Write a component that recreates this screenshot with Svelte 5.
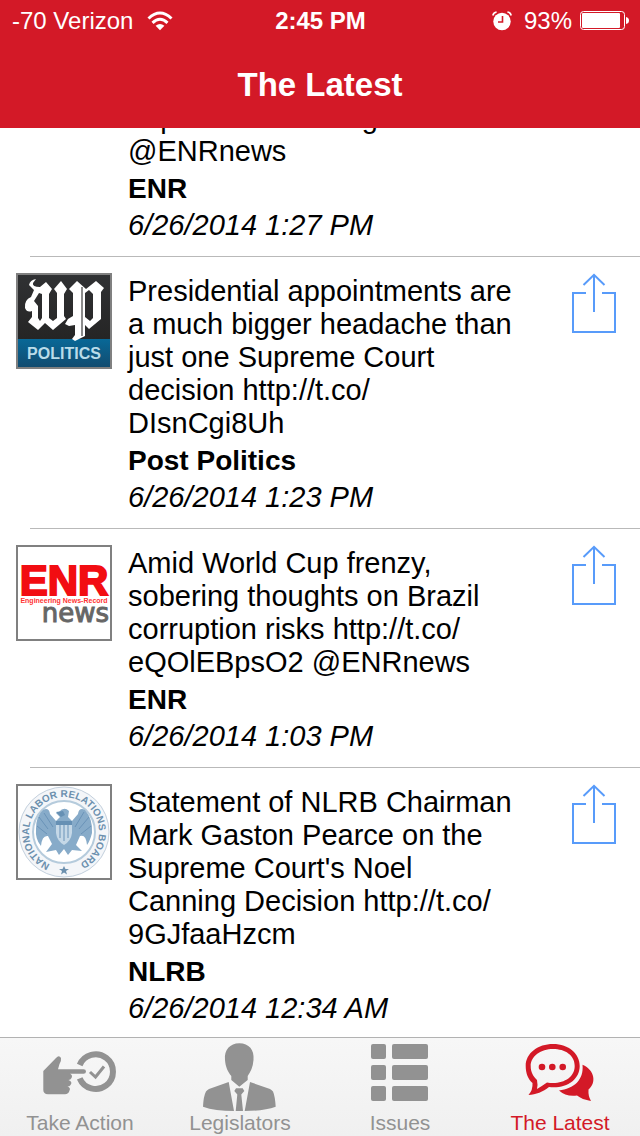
<script lang="ts">
  type Post = { id: number; logo: string; text: string; source: string; date: string };

  const posts: Post[] = [
    {
      id: 1,
      logo: 'enr',
      text: 'Contractors weigh new rules for road and bridge safety work this summer http://t.co/vcirsfleag @ENRnews',
      source: 'ENR',
      date: '6/26/2014 1:27 PM'
    },
    {
      id: 2,
      logo: 'post',
      text: 'Presidential appointments are a much bigger headache than just one Supreme Court decision http://t.co/\u200bDIsnCgi8Uh',
      source: 'Post Politics',
      date: '6/26/2014 1:23 PM'
    },
    {
      id: 3,
      logo: 'enr',
      text: 'Amid World Cup frenzy, sobering thoughts on Brazil corruption risks http://t.co/\u200beQOlEBpsO2 @ENRnews',
      source: 'ENR',
      date: '6/26/2014 1:03 PM'
    },
    {
      id: 4,
      logo: 'nlrb',
      text: "Statement of NLRB Chairman Mark Gaston Pearce on the Supreme Court's Noel Canning Decision http://t.co/\u200b9GJfaaHzcm",
      source: 'NLRB',
      date: '6/26/2014 12:34 AM'
    }
  ];

  const tabs = ['Take Action', 'Legislators', 'Issues', 'The Latest'];
  let active = $state('The Latest');
</script>

<div class="app">
  <header>
    <div class="status">
      <div class="carrier">
        <span>-70 Verizon</span>
        <svg width="26" height="20" viewBox="0 0 26 20" aria-hidden="true">
          <g fill="none" stroke="#fff" stroke-width="3">
            <path d="M1.5 7.5Q13-3.5 24.500 7.500" />
            <path d="M5.500 11.800Q13 4.800 20.500 11.800" />
          </g>
          <path d="M8.600 14.800Q13 11 17.400 14.800L13 19.200Z" fill="#fff" />
        </svg>
      </div>
      <strong>2:45 PM</strong>
      <div class="power">
        <svg class="alarm" width="20" height="20" viewBox="0 0 20 20" aria-hidden="true">
          <circle cx="10" cy="10.5" r="8.7" fill="#fff" />
          <path d="M.8 4.500Q1.500 1.500 4.600 1M15.400 1Q18.500 1.500 19.200 4.500" fill="none" stroke="#fff" stroke-width="1.6" />
          <path d="M10.500 5V11H6" fill="none" stroke="#d31927" stroke-width="1.6" />
        </svg>
        <span>93%</span>
        <svg width="49" height="20" viewBox="0 0 49 20" aria-hidden="true">
          <rect x=".5" y=".5" width="44" height="18" rx="3" fill="none" stroke="#fff" />
          <rect x="2" y="2" width="38" height="15" rx="1" fill="#fff" />
          <path d="M46 6Q49 6.500 49 9.500T46 13Z" fill="#fff" />
        </svg>
      </div>
    </div>
    <h1>The Latest</h1>
  </header>

  <main>
    {#each posts as post (post.id)}
      <article>
        <div class="logo">
          {#if post.logo === 'post'}
            <svg viewBox="0 0 92 92" role="img" aria-label="Post Politics">
              <defs>
                <linearGradient id="dark" x2="0" y2="1"><stop stop-color="#303133" /><stop offset="1" stop-color="#252525" /></linearGradient>
                <linearGradient id="blue" x2="0" y2="1"><stop stop-color="#086897" /><stop offset="1" stop-color="#124c70" /></linearGradient>
              </defs>
              <rect width="92" height="64" fill="url(#dark)" />
              <rect y="64" width="92" height="28" fill="url(#blue)" />
              <g fill="#fff">
                <path d="M18 4Q12 5 11 10L16 15L13 22Q6 25 7 33Q9 38 14 36V42L10 47L20 55L27 48L35 55L48 44L46 41V19L49 14L43 6L36 14L39 18V43L35 46L31 43V19L34 14L28 7L22 12Q14 12 15 8ZM21 18L24 19V43L22 46L20 43V31L16 26Z" />
                <path d="M59 6L51 14L55 18V41L50 44L47 49L51 51L57 50V60L54 64L57 66L67 61V50L71 54L83 44V17L86 13L78 6L68 14ZM67 18L71 15L75 19V43L72 46L67 42Z" />
              </g>
              <path d="M64 12V61" stroke="#8b8b8b" stroke-width="2" />
              <text x="46" y="84" text-anchor="middle" font-size="16" font-weight="700" fill="#b9dcea">POLITICS</text>
            </svg>
          {:else if post.logo === 'enr'}
            <svg viewBox="0 0 92 92" role="img" aria-label="ENR news">
              <text x="46" y="48" text-anchor="middle" font-size="42" font-weight="700" fill="#f20d12" stroke="#f20d12" stroke-width="2">ENR</text>
              <text x="46" y="56" text-anchor="middle" font-size="7" font-weight="700" fill="#f33">Engineering News-Record</text>
              <text class="news" x="91" y="75" text-anchor="end" font-size="26" fill="#666" stroke="#666">news</text>
            </svg>
          {:else}
            <svg viewBox="0 0 92 92" role="img" aria-label="National Labor Relations Board">
              <circle cx="46" cy="46" r="45" fill="#f4f6f9" stroke="#c3d0dd" />
              <circle cx="46" cy="46" r="31" fill="#fff" stroke="#b5cbdc" stroke-width="2" />
              <path id="ring" d="M32 78.200A35 35 0 1 1 60 78.200" fill="none" />
              <text font-size="10" font-weight="700" fill="#6c90ae"><textPath href="#ring">NATIONAL LABOR RELATIONS BOARD</textPath></text>
              <path d="M46 80L47.500 83H51L48 85L49 88.500L46 86.500L43 88.500L44 85L41 83H44.500Z" fill="#6c90ae" />
              <g fill="#87abc9">
                <path d="M41 26Q46 20 51 25L50 31L54 35L60 28Q61 21 67 24Q75 33 74 47Q72 55 69 59Q68 48 62 50L58 59L64 65L54 64L50 69L46 63L41 69L38 64L28 66L34 58L30 50Q24 49 23 60Q17 53 18 43Q18 30 25 24Q31 21 32 28L38 35L42 31L38 27Z" />
                <path d="M38 35H54V47Q53 55 46 59Q39 55 38 47Z" fill="#c5d8e7" />
              </g>
              <path d="M21 31L30 43M19 40L29 48M26 27L35 41M71 31L61 43M73 40L63 48M66 26L57 41M42 39V52M46 39V55M50 39V52" fill="none" stroke="#6a93b8" />
              <path d="M38 35H54V39H38ZM38 26L45 25L47 29L43 31Z" fill="#6690b4" />
            </svg>
          {/if}
        </div>
        <div class="body">
          <p>{post.text}</p>
          <strong>{post.source}</strong>
          <em>{post.date}</em>
        </div>
        <button class="share" aria-label="Share">
          <svg width="44" height="60" viewBox="0 0 44 60" fill="none" stroke="#589bfa" stroke-width="2">
            <path d="M14 20H1V59H43V20H30" />
            <path d="M22 39V2M11.500 12L22 1.800L32.500 12" />
          </svg>
        </button>
      </article>
    {/each}
  </main>

  <nav>
    {#each tabs as tab}
      <button class:active={active === tab} onclick={() => (active = tab)}>
        {#if tab === 'Take Action'}
          <svg width="76" height="70" viewBox="0 0 76 70" fill="currentColor" aria-hidden="true">
            <path d="M1.300 29L14 16Q17 12.500 19 16Q19.500 19 17.500 22L16 27.300H41.500Q44 27.300 44 29.500T41.500 31.700H28Q31 33 29.500 36Q28.500 38 26.500 38Q31 40 28.500 43Q27.500 44.500 25.500 44.500Q29 46 27.500 48.500Q26.500 52.300 23 52.300H6Q1.300 52 1.300 48Z" />
            <path d="M37.700 23A17.300 17.300 0 1 1 37.700 36.300" fill="none" stroke="currentColor" stroke-width="6" />
            <path d="M48 30L53.500 35L62 24.500" fill="none" stroke="currentColor" stroke-width="3" />
          </svg>
        {:else if tab === 'Legislators'}
          <svg width="76" height="70" viewBox="0 0 76 70" fill="currentColor" aria-hidden="true">
            <path d="M37.300 1.300C47 1.300 52.500 8 51.500 18C51 25 48.500 30 45.700 34V38L37.300 44.700L29.300 38V34C26 30 23.500 25 23 18C22 8 28 1.300 37.300 1.300Z" />
            <path d="M26.700 40L32 69Q13 69 1 64.700Q1.500 54 4 49.500Q5 48 7 47ZM48 40L42.700 69Q62 69 73.700 64.700Q73 54 71 49.500Q70 48 68 47ZM34 46.300H40.700L42.300 49L39.300 52.500L41 69H33.700L35.300 52.500L32.300 49Z" />
          </svg>
        {:else if tab === 'Issues'}
          <svg width="76" height="70" viewBox="0 0 76 70" fill="currentColor" aria-hidden="true">
            {#each [2, 23, 44] as y}
              <rect x="9" {y} width="15" height="15" rx="2" />
              <rect x="30" {y} width="36" height="15" rx="2" />
            {/each}
          </svg>
        {:else}
          <svg width="76" height="70" viewBox="0 0 76 70" fill="currentColor" aria-hidden="true">
            <path fill-rule="evenodd" d="M31 2C47 2 57.700 12 57.700 24C57.700 38 44 47 27 45C21 50 14 52.500 6.500 53Q11 48 10.500 41C6 37 3.700 31 3.700 24C3.700 11 16 2 31 2ZM31 7C19 7 8.700 14 8.700 24C8.700 30 11 34 15 38Q16 43 15 47Q20 44 25 40.500C40 43 52.700 36 52.700 24C52.700 13 43 7 31 7Z" />
            <circle cx="20" cy="25" r="3.300" /><circle cx="30.300" cy="25" r="3.300" /><circle cx="40.700" cy="25" r="3.300" />
            <path d="M60.500 22.700C73 28 74.500 41 66.500 47.500Q66 54 69 59Q60 57.500 55 53.500Q44 55 37 48.500C52 46.500 62 38 60.500 22.700Z" />
          </svg>
        {/if}
        <span>{tab}</span>
      </button>
    {/each}
  </nav>
</div>

<style>
  :global(body) { margin: 0; background: #fff; }
  .app {
    display: flex; flex-direction: column; height: 100vh;
    font-family: "Liberation Sans", Arial, sans-serif; color: #000;
  }
  header { background: #d31927; color: #fff; }
  .status {
    display: grid; grid-template-columns: 1fr auto 1fr; align-items: center;
    height: 40px; padding: 1px 11px 0 12px; font-size: 24px;
  }
  .carrier, .power { display: flex; align-items: center; }
  .carrier { gap: 14px; }
  .power { justify-content: flex-end; gap: 8px; }
  .alarm { margin-right: 4px; }
  h1 { margin: 0; font-size: 33px; line-height: 87px; text-align: center; }

  main {
    flex: 1; min-height: 0; overflow: hidden;
    display: flex; flex-direction: column; justify-content: flex-end;
  }
  article {
    position: relative; flex: none;
    display: grid; grid-template-columns: 96px 1fr 44px; column-gap: 16px; align-items: start;
    padding: 17px 24px 13px 16px;
  }
  article + article::before {
    content: ''; position: absolute; top: 0; left: 30px; right: 0;
    height: 1px; background: #b9b9b9;
  }
  article:last-child { padding-bottom: 11px; }
  .logo { border: 2px solid #808080; height: 92px; }
  .logo svg { display: block; width: 100%; height: 100%; }
  .news { font-family: "DejaVu Sans", sans-serif; }
  .body { font-size: 29px; line-height: 36px; padding-right: 40px; }
  .body p { margin: 2px 0 3px; line-height: 33px; }
  .body strong, .body em { display: block; }
  .body strong { font-size: 28px; }
  button { border: 0; padding: 0; background: none; color: inherit; font: inherit; }
  .share svg { display: block; }

  nav {
    display: grid; grid-template-columns: repeat(4, 1fr);
    border-top: 1px solid #b2b2b2; background: linear-gradient(#f7f7f7, #f0f0f0);
    color: #929292;
  }
  nav button {
    display: flex; flex-direction: column; align-items: center;
    padding: 4px 0 2px; font-size: 21px; line-height: 22px;
  }
  nav .active { color: #d31927; }
</style>
